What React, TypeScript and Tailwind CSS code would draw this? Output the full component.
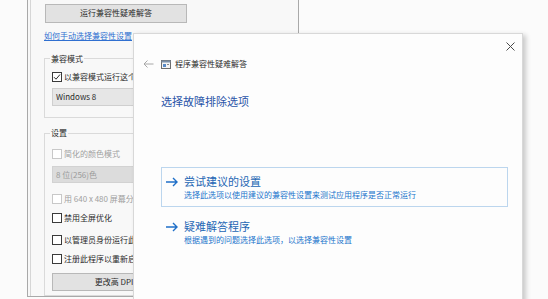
import React from "react";

const font = { fontFamily: '"Noto Sans CJK SC", "Noto Sans", sans-serif' };

function Check({ checked, disabled, label }: { checked?: boolean; disabled?: boolean; label: string }) {
  return (
    <div className="flex items-center h-[12px] gap-[2px] whitespace-nowrap">
      <div
        className={
          "w-[10px] h-[10px] border bg-white flex items-center justify-center shrink-0 " +
          (disabled ? "border-[#c8c8c8]" : "border-[#3a3a3a]")
        }
      >
        {checked && (
          <svg width="8" height="8" viewBox="0 0 8 8">
            <path d="M1 4.2 L3 6.2 L7 1.5" fill="none" stroke="#2a2a2a" strokeWidth="1" />
          </svg>
        )}
      </div>
      <span className={"text-[8px] leading-none " + (disabled ? "text-[#a0a0a0]" : "text-[#2a2a2a]")}>{label}</span>
    </div>
  );
}

export default function App() {
  return (
    <div className="relative w-[548px] h-[299px] overflow-hidden bg-[#fbfbfb]" style={font}>
      {/* background properties window */}
      <div className="absolute left-[27px] top-[-10px] w-[272px] h-[307px] border-l border-r border-b border-[#a9a9a9] bg-[#f8f8f8]">
        <div className="ml-[2px] h-full border-l border-[#d6d6d6] pt-[14px] pl-[14px] flex flex-col">
          <div className="w-[142px] h-[19px] bg-[#e2e2e2] border border-[#b8b8b8] flex items-center justify-center text-[8px] leading-none text-[#2a2a2a]">
            运行兼容性疑难解答
          </div>
          <div className="mt-[9px] ml-[-1px] text-[8px] leading-none text-[#2f6fd0] underline whitespace-nowrap">
            如何手动选择兼容性设置
          </div>
          <fieldset className="mt-[15px] ml-[-1px] w-[240px] h-[64px] border border-[#dadada] px-[7px]">
            <legend className="text-[8px] leading-none text-[#2a2a2a] px-[1px] ml-[-2px]">兼容模式</legend>
            <div className="mt-[8px]">
              <Check checked label="以兼容模式运行这个程序：" />
            </div>
            <div className="mt-[5px] w-[142px] h-[18px] bg-[#e6e6e6] border border-[#cfcfcf] flex items-center pl-[3px] text-[8px] leading-none text-[#2a2a2a]">
              Windows 8
            </div>
          </fieldset>
          <fieldset className="mt-[11px] ml-[-1px] w-[240px] h-[168px] border border-[#dadada] px-[7px]">
            <legend className="text-[8px] leading-none text-[#2a2a2a] px-[1px] ml-[-2px]">设置</legend>
            <div className="mt-[11px]">
              <Check disabled label="简化的颜色模式" />
            </div>
            <div className="mt-[6px] w-[142px] h-[17px] bg-[#dcdcdc] border border-[#d2d2d2] flex items-center pl-[3px] text-[8px] leading-none text-[#9a9a9a]">
              8 位(256)色
            </div>
            <div className="mt-[10px]">
              <Check disabled label="用 640 x 480 屏幕分辨率运行" />
            </div>
            <div className="mt-[7px]">
              <Check label="禁用全屏优化" />
            </div>
            <div className="mt-[10px]">
              <Check label="以管理员身份运行此程序" />
            </div>
            <div className="mt-[7px]">
              <Check label="注册此程序以重新启动" />
            </div>
            <div className="mt-[8px] w-[142px] h-[18px] bg-[#e2e2e2] border border-[#b8b8b8] flex items-center justify-center text-[8px] leading-none text-[#2a2a2a]">
              更改高 DPI 设置
            </div>
          </fieldset>
        </div>
      </div>

      {/* troubleshooter dialog */}
      <div className="absolute left-[133px] top-[33px] w-[390px] h-[280px] bg-[#fdfdfd] border border-[#d8d8d8] shadow-[3px_2px_5px_rgba(0,0,0,0.2)]">
        <div className="absolute right-[7px] top-[8px] w-[9px] h-[9px]">
          <svg width="9" height="9" viewBox="0 0 9 9">
            <path d="M0.5 0.5 L8.5 8.5 M8.5 0.5 L0.5 8.5" stroke="#4a4a4a" strokeWidth="1" />
          </svg>
        </div>
        <div className="flex flex-col">
          <div className="flex items-center mt-[24px] ml-[9px] h-[12px]">
            <svg width="11" height="8" viewBox="0 0 11 8">
              <path d="M10.5 4 H1 M4.5 0.5 L1 4 L4.5 7.5" fill="none" stroke="#a8a8a8" strokeWidth="1" />
            </svg>
            <svg className="ml-[7px]" width="10" height="9" viewBox="0 0 10 9">
              <rect x="0.5" y="0.5" width="9" height="8" fill="#f4f4f4" stroke="#6d6d6d" />
              <rect x="0.5" y="0.5" width="9" height="2" fill="#7a8fa8" />
              <rect x="2" y="4" width="3" height="3" fill="#5a8bc6" />
              <rect x="6" y="4" width="2" height="1" fill="#888" />
            </svg>
            <span className="ml-[4px] text-[8px] leading-none text-[#2a2a2a] whitespace-nowrap">程序兼容性疑难解答</span>
          </div>
          <div className="mt-[26px] ml-[27px] text-[11px] leading-none text-[#2a54a8] whitespace-nowrap">选择故障排除选项</div>
          <div className="mt-[60px] ml-[27px] w-[347px] h-[40px] border border-[#bcd6ee] flex pl-[4px] pt-[8px]">
            <svg className="mt-[1px]" width="12" height="10" viewBox="0 0 12 10">
              <path d="M0 5 H11 M7 1 L11 5 L7 9" fill="none" stroke="#1f6fc8" strokeWidth="1.4" />
            </svg>
            <div className="ml-[6px] flex flex-col">
              <span className="text-[11px] leading-none text-[#2466b4] whitespace-nowrap">尝试建议的设置</span>
              <span className="mt-[4px] text-[8px] leading-none text-[#2274cc] whitespace-nowrap">
                选择此选项以使用建议的兼容性设置来测试应用程序是否正常运行
              </span>
            </div>
          </div>
          <div className="mt-[14px] ml-[28px] flex pl-[4px]">
            <svg className="mt-[1px]" width="12" height="10" viewBox="0 0 12 10">
              <path d="M0 5 H11 M7 1 L11 5 L7 9" fill="none" stroke="#1f6fc8" strokeWidth="1.4" />
            </svg>
            <div className="ml-[6px] flex flex-col">
              <span className="text-[11px] leading-none text-[#2466b4] whitespace-nowrap">疑难解答程序</span>
              <span className="mt-[4px] text-[8px] leading-none text-[#2274cc] whitespace-nowrap">
                根据遇到的问题选择此选项，以选择兼容性设置
              </span>
            </div>
          </div>
        </div>
      </div>
    </div>
  );
}
